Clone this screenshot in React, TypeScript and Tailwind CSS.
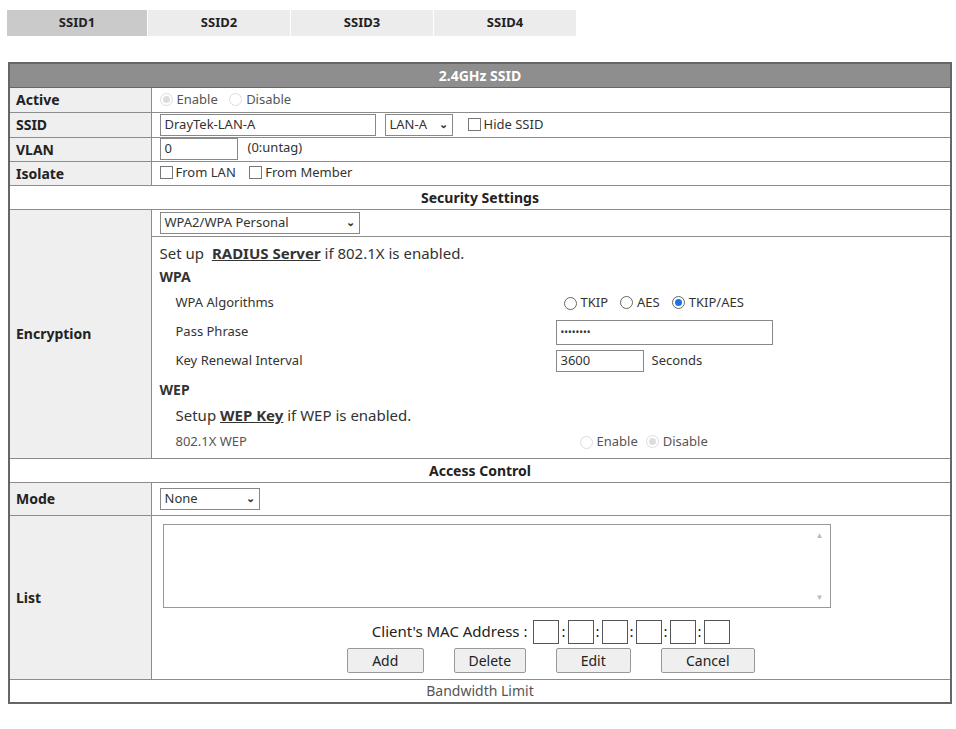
import React from "react";

const SANS = "font-['Liberation_Sans',Arial,sans-serif]";
const VER = "font-['DejaVu_Sans',Verdana,sans-serif]";
const L = `border border-[#8c8c8c] bg-[#efefef] px-[6px] text-[14px] font-bold text-[#222] ${SANS}`;
const C = `border border-[#8c8c8c] bg-white px-[8px] text-[13px] text-[#333] ${VER}`;
const H = `border border-[#8c8c8c] bg-white text-center text-[14px] font-bold text-[#222] ${SANS}`;

const Radio = ({ on, dis }: { on?: boolean; dis?: boolean }) => (
  <span className={`inline-block w-[13px] h-[13px] rounded-full border mr-[4px] align-[-2px] ${dis ? "border-[#ddd]" : "border-[#666]"} relative`}>
    {on && <span className={`absolute inset-[2px] rounded-full ${dis ? "bg-[#ddd]" : "bg-[#1a73e8]"}`} />}
  </span>
);
const Box = () => <span className="inline-block w-[13px] h-[13px] border border-[#777] mr-[3px] align-[-2px]" />;
const Sel = ({ w, t }: { w: string; t: string }) => (
  <span className={`inline-flex items-center justify-between border border-[#888] h-[22px] px-[4px] text-[13px] text-[#333] ${SANS} ${w}`}>
    {t}<span className="text-[11px] font-bold">⌄</span>
  </span>
);
const Btn = ({ t, w }: { t: string; w: string }) => (
  <span className={`inline-flex items-center justify-center h-[25px] ${w} border border-[#999] bg-[#efefef] rounded-[2px] text-[14px] text-[#222] ${SANS}`}>{t}</span>
);

export default function App() {
  return (
    <div className="w-[956px] h-[729px] overflow-hidden bg-white">
      <div className={`flex pt-[10px] pl-[7px] text-[13px] font-bold font-['Liberation_Serif',serif] text-[#222]`}>
        <div className="w-[140px] h-[26px] flex items-center justify-center bg-[#cacaca]">SSID1</div>
        {["SSID2", "SSID3", "SSID4"].map((s) => (
          <div key={s} className="w-[143px] h-[26px] flex items-center justify-center bg-[#ececec] border-l border-white">{s}</div>
        ))}
      </div>
      <table className="ml-[8px] mt-[26px] w-[944px] table-fixed border-collapse border-2 border-[#666]">
        <colgroup><col className="w-[142px]" /><col /></colgroup>
        <tbody>
          <tr className="h-[24px]">
            <td colSpan={2} className="bg-[#8e8e8e] text-white text-center font-bold text-[14px] font-['Liberation_Serif',serif] border border-[#666]">2.4GHz SSID</td>
          </tr>
          <tr className="h-[25px]"><td className={L}>Active</td><td className={`${C} text-[#555]`}><Radio on dis />Enable <span className="ml-[8px]"><Radio dis />Disable</span></td></tr>
          <tr className="h-[25px]"><td className={L}>SSID</td><td className={C}>
            <div className="flex items-center gap-[9px]">
              <span className={`inline-flex items-center border border-[#888] h-[22px] w-[216px] px-[4px] text-[13px] ${SANS}`}>DrayTek-LAN-A</span>
              <Sel w="w-[68px]" t="LAN-A" />
              <span className="ml-[6px]"><Box />Hide SSID</span>
            </div></td></tr>
          <tr className="h-[24px]"><td className={L}>VLAN</td><td className={C}>
            <span className={`inline-flex items-center border border-[#888] h-[22px] w-[78px] px-[4px] text-[13px] align-middle ${SANS}`}>0</span>
            <span className="ml-[10px]">(0:untag)</span></td></tr>
          <tr className="h-[24px]"><td className={L}>Isolate</td><td className={C}><Box />From LAN <span className="ml-[10px]"><Box />From Member</span></td></tr>
          <tr className="h-[24px]"><td colSpan={2} className={H}>Security Settings</td></tr>
          <tr className="h-[27px]">
            <td rowSpan={2} className={L}>Encryption</td>
            <td className={C}><Sel w="w-[200px]" t="WPA2/WPA Personal" /></td>
          </tr>
          <tr>
            <td className={`${C} pt-[2px] pb-[2px]`}>
              <div className={`${SANS} text-[15px] h-[26px] flex items-end`}><span>Set up <span className="ml-[4px] font-bold underline">RADIUS Server</span> if 802.1X is enabled.</span></div>
              <div className={`font-bold ${SANS} text-[14px] h-[24px] flex items-center`}>WPA</div>
              <div className="flex items-center h-[29px] pl-[16px]"><span className="w-[388px]">WPA Algorithms</span><Radio />TKIP <span className="ml-[12px]"><Radio /></span>AES <span className="ml-[12px]"><Radio on /></span>TKIP/AES</div>
              <div className="flex items-center h-[29px] pl-[16px]"><span className="w-[380px]">Pass Phrase</span><span className="inline-flex items-center border border-[#888] h-[25px] w-[217px] px-[4px] text-[10px]">••••••••</span></div>
              <div className="flex items-center h-[29px] pl-[16px]"><span className="w-[380px]">Key Renewal Interval</span><span className={`inline-flex items-center border border-[#888] h-[22px] w-[88px] px-[4px] text-[13px] ${SANS}`}>3600</span><span className="ml-[8px]">Seconds</span></div>
              <div className={`font-bold ${SANS} text-[14px] h-[27px] flex items-center`}>WEP</div>
              <div className={`pl-[16px] ${SANS} text-[15px] h-[26px] flex items-center`}><span>Setup <span className="font-bold underline">WEP Key</span> if WEP is enabled.</span></div>
              <div className="flex items-center h-[27px] pl-[16px] text-[#555]"><span className="w-[404px]">802.1X WEP</span><Radio dis />Enable <span className="ml-[8px]"><Radio on dis /></span>Disable</div>
            </td>
          </tr>
          <tr className="h-[24px]"><td colSpan={2} className={H}>Access Control</td></tr>
          <tr className="h-[33px]"><td className={L}>Mode</td><td className={C}><Sel w="w-[100px]" t="None" /></td></tr>
          <tr>
            <td className={`${L} bg-[#e4e4e4]`}>List</td>
            <td className={`${C} pt-[8px] pb-[6px]`}>
              <div className="ml-[3px] w-[668px] h-[84px] border border-[#999] relative">
                <span className="absolute right-[6px] top-[4px] text-[8px] text-[#bbb]">▲</span>
                <span className="absolute right-[6px] bottom-[4px] text-[8px] text-[#bbb]">▼</span>
              </div>
              <div className={`flex items-center justify-center gap-[2px] mt-[12px] text-[15px] text-[#222] ${SANS}`}>
                <span className="mr-[4px]">Client's MAC Address :</span>
                {[0, 1, 2, 3, 4, 5].map((i) => (
                  <React.Fragment key={i}>
                    {i > 0 && <span>:</span>}
                    <span className="inline-block w-[26px] h-[24px] border border-[#555]" />
                  </React.Fragment>
                ))}
              </div>
              <div className="flex justify-center gap-[30px] mt-[4px]">
                <Btn t="Add" w="w-[77px]" /><Btn t="Delete" w="w-[72px]" /><Btn t="Edit" w="w-[75px]" /><Btn t="Cancel" w="w-[94px]" />
              </div>
            </td>
          </tr>
          <tr className="h-[24px]"><td colSpan={2} className={`${H} font-normal text-[#555]`}>Bandwidth Limit</td></tr>
        </tbody>
      </table>
    </div>
  );
}
